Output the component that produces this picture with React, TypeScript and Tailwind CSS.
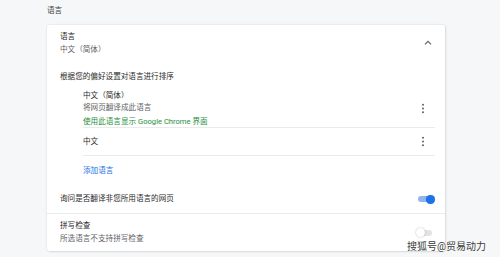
import React from 'react';

const Kebab: React.FC = () => (
  <svg width="4" height="11" viewBox="0 0 4 11" className="text-[#5f6368]">
    <circle cx="2" cy="1.7" r="1" fill="currentColor" />
    <circle cx="2" cy="5.5" r="1" fill="currentColor" />
    <circle cx="2" cy="9.3" r="1" fill="currentColor" />
  </svg>
);

const Toggle: React.FC<{ on: boolean }> = ({ on }) => (
  <div className="relative w-[18px] h-[10px] flex items-center">
    <div className={on ? 'w-[15px] h-[6px] rounded-full bg-[#8fb4ef] ml-[1px]' : 'w-[15px] h-[6px] rounded-full bg-[#e3e3e3] ml-[1px]'} />
    {on ? (
      <div className="absolute right-0 top-[0.5px] w-[9px] h-[9px] rounded-full bg-[#1a73e8] shadow-[0_0_1px_rgba(0,0,0,0.3)]" />
    ) : (
      <div className="absolute left-0 top-[0.5px] w-[9px] h-[9px] rounded-full bg-white shadow-[0_0_2px_rgba(0,0,0,0.3)]" />
    )}
  </div>
);

export default function App() {
  return (
    <div
      className="relative w-[500px] h-[257px] overflow-hidden bg-[#f6f7f9] text-[7.6px] text-[#2a2a2a] leading-[12px]"
      style={{ fontFamily: 'Roboto, "Noto Sans CJK SC", sans-serif' }}
    >
      <div className="pl-[47px] h-[25px] pt-[5px] text-[#3c4043]">语言</div>

      <div className="ml-[47px] w-[398px] h-[226px] bg-white rounded-[2px] shadow-[0_0_2px_rgba(0,0,0,0.15),1px_1px_2px_rgba(0,0,0,0.08)]">
        {/* language header */}
        <div className="h-[35px] flex items-center pl-[13px] pr-[13px]">
          <div className="flex-1 leading-[13px] pt-[1px]">
            <div>语言</div>
            <div className="text-[#5f6368]">中文（简体）</div>
          </div>
          <svg width="8" height="5" viewBox="0 0 8 5" className="text-[#5f6368]">
            <path d="M1 4.3 L4 1.3 L7 4.3" fill="none" stroke="currentColor" strokeWidth="1.2" />
          </svg>
        </div>

        <div className="h-[30px] flex items-center pl-[13px] pt-[3px]">根据您的偏好设置对语言进行排序</div>

        <div className="ml-[36px] mr-[10px]">
          <div className="h-[38px] flex items-center border-b border-[#ebebeb]">
            <div className="flex-1 pt-[1px]">
              <div>中文（简体）</div>
              <div className="text-[#5f6368]">将网页翻译成此语言</div>
              <div className="text-[#1e8e3e] mt-[2px]">使用此语言显示 Google Chrome 界面</div>
            </div>
            <div className="w-[20px] flex justify-start pl-[6px]">
              <Kebab />
            </div>
          </div>
          <div className="h-[28px] flex items-center border-b border-[#ebebeb]">
            <div className="flex-1 pt-[1px]">中文</div>
            <div className="w-[20px] flex justify-start pl-[6px]">
              <Kebab />
            </div>
          </div>
          <div className="h-[29px] flex items-center text-[#1a73e8]">添加语言</div>
        </div>

        <div className="h-[29px] flex items-center pl-[13px] pr-[10px] border-b border-[#ebebeb]">
          <div className="flex-1">询问是否翻译非您所用语言的网页</div>
          <Toggle on />
        </div>

        <div className="h-[37px] flex items-center pl-[13px] pr-[11px]">
          <div className="flex-1 leading-[12.5px]">
            <div>拼写检查</div>
            <div className="text-[#5f6368]">所选语言不支持拼写检查</div>
          </div>
          <Toggle on={false} />
        </div>
      </div>

      <div className="absolute left-[407px] top-[240px] text-[10px] leading-[13px] text-[#3a3a3a] [text-shadow:0_0_1px_#fff,0_0_2px_#fff]">
        搜狐号@贸易动力
      </div>
    </div>
  );
}
